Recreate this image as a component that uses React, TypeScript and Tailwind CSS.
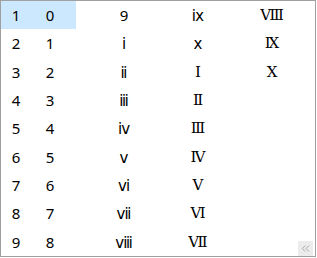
import { ChevronsLeft } from 'lucide-react';

const first = ['0', '1', '2', '3', '4', '5', '6', '7', '8'];
const columns = [
  ['9', 'ⅰ', 'ⅱ', 'ⅲ', 'ⅳ', 'ⅴ', 'ⅵ', 'ⅶ', 'ⅷ'],
  ['ⅸ', 'ⅹ', 'Ⅰ', 'Ⅱ', 'Ⅲ', 'Ⅳ', 'Ⅴ', 'Ⅵ', 'Ⅶ'],
  ['Ⅷ', 'Ⅸ', 'Ⅹ'],
];

// upper-case numerals come out with serifs in the original
const upper = /[Ⅰ-Ⅻ]/;

export default function App() {
  return (
    <div className="w-[317px] h-[258px] bg-white">
      <div
        className="relative flex w-[316px] h-[257px] border border-[#a0a0a0] bg-white text-[15px] text-black"
        style={{ fontFamily: '"Noto Sans", "DejaVu Sans", "Noto Sans CJK SC", sans-serif' }}
      >
        <div className="grid w-[75px] grid-rows-9">
          {first.map((c, i) => (
            <div
              key={c}
              className={`flex items-center ${i === 0 ? 'bg-[#cce8ff]' : ''}`}
            >
              <span className="w-[30px] text-center">{i + 1}</span>
              <span className="w-[38px] text-center">{c}</span>
            </div>
          ))}
        </div>
        <div className="flex pl-[11px]">
          {columns.map((col, ci) => (
            <div key={ci} className="grid w-[74px] grid-rows-9">
              {col.map((c) => (
                <div
                  key={c}
                  className={`flex items-center justify-center ${
                    upper.test(c) ? 'font-[family-name:DejaVu_Serif,serif] text-[15px]' : ''
                  }`}
                >
                  {c}
                </div>
              ))}
            </div>
          ))}
        </div>
        <button className="absolute right-[2px] bottom-0 flex h-[15px] w-[15px] items-center justify-center bg-[#ececec] text-[#8a8a8a]">
          <ChevronsLeft size={13} strokeWidth={1.25} />
        </button>
      </div>
    </div>
  );
}
